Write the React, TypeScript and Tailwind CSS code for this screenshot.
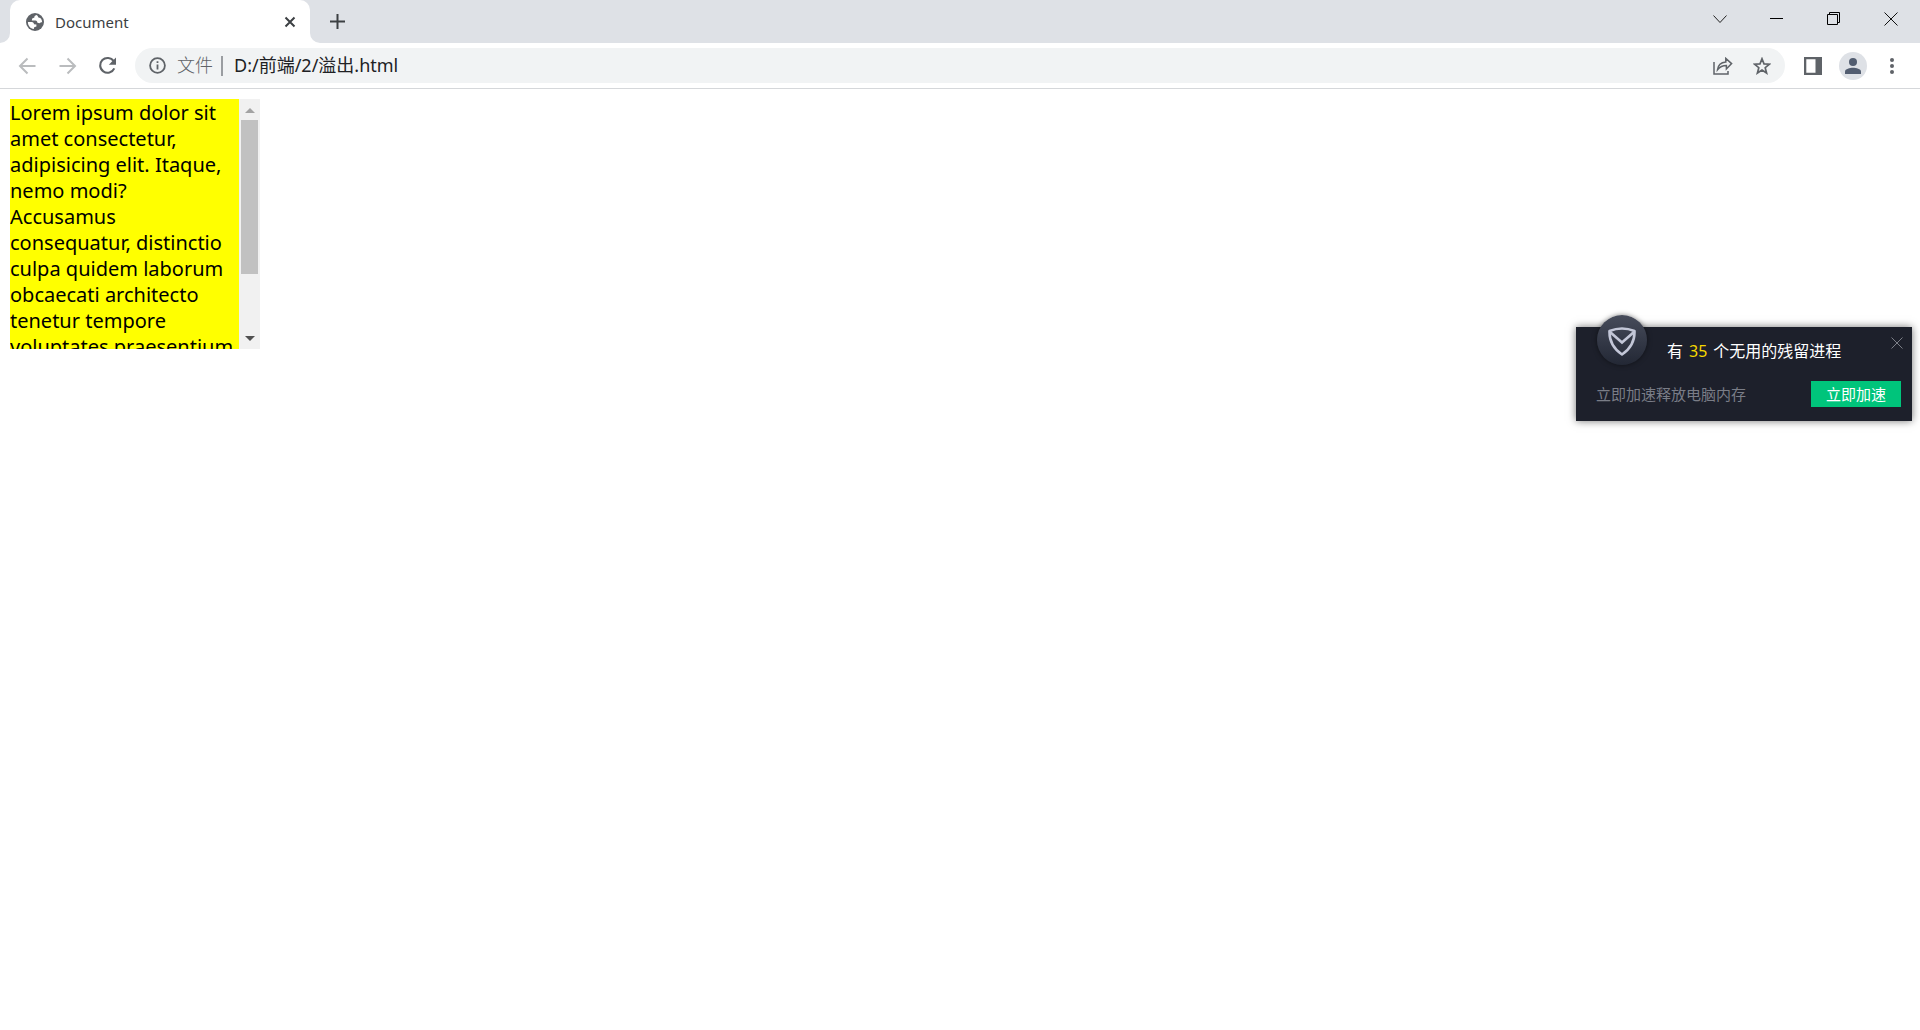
import React from "react";

const lines = [
  "Lorem ipsum dolor sit",
  "amet consectetur,",
  "adipisicing elit. Itaque,",
  "nemo modi?",
  "Accusamus",
  "consequatur, distinctio",
  "culpa quidem laborum",
  "obcaecati architecto",
  "tenetur tempore",
  "voluptates praesentium",
];

function GlobeIcon() {
  return (
    <svg viewBox="0 0 18 18" className="size-[18px]" aria-hidden="true">
      <circle cx="9" cy="9" r="9" fill="#5f6368" />
      <path
        d="M10.5 2 C8.8 2.6 8.2 3.4 8.4 4.4 L6.2 5.4 L5.8 7.4 L9.4 7.4 C10.8 7.6 11.4 8.6 11.4 9.8 L13.4 10.2 C14.4 10 15 9.2 16.2 9.4 C16 6.2 14.4 4.8 13.2 4.8 C11.8 4.8 12.4 3 10.5 2 Z M1.9 9 L5.8 9 C7.2 9.2 8 10 8 11.2 L10.4 11.4 L10.4 13.4 L8.2 14.2 L7.8 16.1 C4.4 15.6 1.9 13 1.9 9 Z"
        fill="#fff"
      />
    </svg>
  );
}

function TabStrip() {
  return (
    <header className="flex h-[43px] items-stretch bg-[#dee1e6] pl-[10px]">
      <div className="relative flex w-[300px] items-center rounded-t-[10px] bg-white pl-4 pr-[14px]">
        <svg viewBox="0 0 10 10" className="absolute -left-[10px] bottom-0 size-[10px]" aria-hidden="true">
          <path d="M10 0 V10 H0 A10 10 0 0 0 10 0Z" fill="#fff" />
        </svg>
        <svg viewBox="0 0 10 10" className="absolute -right-[10px] bottom-0 size-[10px]" aria-hidden="true">
          <path d="M0 0 V10 H10 A10 10 0 0 1 0 0Z" fill="#fff" />
        </svg>
        <GlobeIcon />
        <span className="ml-[11px] flex-1 text-[15px] leading-5 text-[#3c4043]">Document</span>
        <button aria-label="Close tab" className="grid size-3 place-items-center">
          <svg viewBox="0 0 12 12" className="size-3" stroke="#3c4043" strokeWidth="2" fill="none">
            <path d="M1.5 1.5 L10.5 10.5 M10.5 1.5 L1.5 10.5" />
          </svg>
        </button>
      </div>
      <button aria-label="New tab" className="ml-5 grid w-[15px] place-items-center">
        <svg viewBox="0 0 15 15" className="size-[15px]" stroke="#3c4043" strokeWidth="2" fill="none">
          <path d="M7.5 0 V15 M0 7.5 H15" />
        </svg>
      </button>
      <div className="ml-auto flex h-[37px] pr-px">
        <button aria-label="Search tabs" className="grid w-[57px] place-items-center">
          <svg viewBox="0 0 14 14" className="size-[14px]" stroke="#222" fill="none">
            <path d="M0.5 3.5 L7 10.5 L13.5 3.5" />
          </svg>
        </button>
        <button aria-label="Minimize" className="grid w-[57px] place-items-center">
          <svg viewBox="0 0 13 13" className="size-[13px]" stroke="#000" fill="none">
            <path d="M0 6.5 H13" />
          </svg>
        </button>
        <button aria-label="Restore" className="grid w-[57px] place-items-center">
          <svg viewBox="0 0 13 13" className="size-[13px]" stroke="#000" fill="none">
            <path d="M0.5 2.5 H10.5 V12.5 H0.5 Z M2.5 2.5 V0.5 H12.5 V10.5 H10.5" />
          </svg>
        </button>
        <button aria-label="Close window" className="grid w-[57px] place-items-center">
          <svg viewBox="0 0 14 14" className="size-[14px]" stroke="#111" fill="none">
            <path d="M0.5 0.5 L13.5 13.5 M13.5 0.5 L0.5 13.5" />
          </svg>
        </button>
      </div>
    </header>
  );
}

function Toolbar() {
  return (
    <nav className="flex h-[46px] items-center border-b border-[#d5d7da] bg-white pl-[18px] pr-[25px]">
      <button aria-label="Back">
        <svg viewBox="0 0 18 18" className="size-[18px]" stroke="#babcbe" strokeWidth="2" fill="none">
          <path d="M17.5 9 H2 M9.5 1.5 L2 9 L9.5 16.5" />
        </svg>
      </button>
      <button aria-label="Forward" className="ml-[23px]">
        <svg viewBox="0 0 18 18" className="size-[18px]" stroke="#babcbe" strokeWidth="2" fill="none">
          <path d="M0.5 9 H16 M8.5 1.5 L16 9 L8.5 16.5" />
        </svg>
      </button>
      <button aria-label="Reload" className="ml-[21px]">
        <svg viewBox="0 0 20 20" className="size-5">
          <path d="M15.7 5.2 A7.4 7.4 0 1 0 16.3 12.4" stroke="#5f6368" strokeWidth="2.1" fill="none" />
          <path d="M18 1.6 V8.8 H10.8 Z" fill="#5f6368" />
        </svg>
      </button>
      <div className="ml-[17px] flex h-[35px] flex-1 items-center rounded-full bg-[#f1f3f4] pl-[14px] pr-[14px]">
        <svg viewBox="0 0 17 17" className="size-[17px] shrink-0" stroke="#5f6368" strokeWidth="1.8" fill="none" aria-hidden="true">
          <circle cx="8.5" cy="8.5" r="7.4" />
          <path d="M8.5 7.5 V12.5 M8.5 4.2 V6" />
        </svg>
        <label htmlFor="url" className="ml-[11px] pb-[2px] text-[18px] font-light leading-6 text-[#5f6368]">
          文件
        </label>
        <span className="ml-2 h-5 w-[2px] bg-[#9a9da1]" />
        <input
          id="url"
          defaultValue="D:/前端/2/溢出.html"
          className="ml-[11px] min-w-0 flex-1 bg-transparent pb-[2px] text-[18px] leading-6 text-[#202124] outline-none"
        />
        <button aria-label="Share">
          <svg viewBox="0 0 20 18" className="h-[18px] w-5" stroke="#5f6368" strokeWidth="1.5" fill="none">
            <path d="M1 5 V17 H15 V14" />
            <path d="M4.5 12.8 C5 8.4 8 5.4 12.8 5 V1.4 L18.6 6.6 L13.4 12 V8.6 C9.4 8.6 6.8 10 4.5 12.8 Z" />
          </svg>
        </button>
        <button aria-label="Bookmark" className="ml-5">
          <svg viewBox="0 0 18 18" className="size-[18px]" stroke="#5f6368" strokeWidth="1.7" fill="none">
            <path d="M9 1.8 L11 6.9 L16.4 7.2 L12.2 10.7 L13.6 16 L9 13 L4.4 16 L5.8 10.7 L1.6 7.2 L7 6.9 Z" />
          </svg>
        </button>
      </div>
      <button aria-label="Side panel" className="ml-[19px]">
        <svg viewBox="0 0 18 18" className="size-[18px]">
          <path d="M0 0 H18 V18 H0 Z M2.3 2.3 V15.7 H11.5 V2.3 Z" fill="#5f6368" fillRule="evenodd" />
        </svg>
      </button>
      <button aria-label="Profile" className="ml-[17px] grid size-7 place-items-center rounded-full bg-[#dee1e6]">
        <svg viewBox="0 0 16 16" className="size-4" fill="#525d70">
          <circle cx="8" cy="4" r="4" />
          <path d="M0 16 V13.5 C0 11 5 9.8 8 9.8 S16 11 16 13.5 V16 Z" />
        </svg>
      </button>
      <button aria-label="Menu" className="ml-[22px]">
        <svg viewBox="0 0 6 18" className="h-[18px] w-[6px]" fill="#5f6368">
          <circle cx="3" cy="3" r="2" />
          <circle cx="3" cy="9" r="2" />
          <circle cx="3" cy="15" r="2" />
        </svg>
      </button>
    </nav>
  );
}

function ScrollBox() {
  return (
    <section className="flex size-[250px] overflow-hidden bg-[#ffff00]">
      <p className="min-w-0 flex-1 pt-px text-[20px] leading-[26px] text-black">
        {lines.map((line) => (
          <span key={line} className="block whitespace-nowrap">
            {line}
          </span>
        ))}
      </p>
      <div className="flex w-[21px] flex-col items-center bg-[#f1f1f1]">
        <button aria-label="Scroll up" className="grid h-[21px] w-full place-items-center">
          <svg viewBox="0 0 10 5" className="mt-[2px] h-[5px] w-[10px]" fill="#a3a3a3">
            <path d="M5 0 L10 5 H0 Z" />
          </svg>
        </button>
        <div className="h-[154px] w-[17px] bg-[#c1c1c1]" />
        <button aria-label="Scroll down" className="mt-auto grid h-[21px] w-full place-items-center">
          <svg viewBox="0 0 10 5" className="h-[5px] w-[10px]" fill="#505050">
            <path d="M0 0 H10 L5 5 Z" />
          </svg>
        </button>
      </div>
    </section>
  );
}

function Notification() {
  return (
    <aside className="absolute right-2 top-[327px] w-[336px] bg-[#1d202b] pb-[14px] pl-5 pr-[11px] pt-3 shadow-[0_0_8px_rgba(0,0,0,0.55)]">
      <div className="absolute -top-3 left-[21px] grid size-[50px] place-items-center rounded-full bg-linear-to-b from-[#474c5b] to-[#232835] shadow-[0_0_5px_rgba(0,0,0,0.5)]">
        <svg viewBox="0 0 28 29" className="mt-[2px] h-[29px] w-7" fill="none" aria-hidden="true">
          <path d="M1.5 4 Q14 -1 26.5 4 Q27 19 14 27.5 Q1 19 1.5 4 Z" stroke="#c3c7d8" strokeWidth="2.6" strokeLinejoin="round" />
          <path d="M2 5 L14 15.5 L26 5" stroke="#c3c7d8" strokeWidth="2.6" />
        </svg>
      </div>
      <h2 className="ml-[71px] flex gap-[6px] text-[16px] leading-6 text-white">
        <span>有</span>
        <span className="text-[#f5d800]">35</span>
        <span>个无用的残留进程</span>
      </h2>
      <button aria-label="Dismiss" className="absolute right-[9px] top-[10px]">
        <svg viewBox="0 0 12 12" className="size-3" stroke="#7c7f88" fill="none">
          <path d="M0.5 0.5 L11.5 11.5 M11.5 0.5 L0.5 11.5" />
        </svg>
      </button>
      <div className="mt-[18px] flex items-center justify-between">
        <p className="text-[15px] leading-6 text-[#7a7d87]">立即加速释放电脑内存</p>
        <button className="h-[26px] w-[90px] bg-[#00c47b] text-[15px] leading-6 text-white">立即加速</button>
      </div>
    </aside>
  );
}

export default function App() {
  return (
    <div className="relative min-h-screen bg-white font-['Noto_Sans','Noto_Sans_CJK_SC',sans-serif]">
      <TabStrip />
      <Toolbar />
      <main className="p-[10px]">
        <ScrollBox />
      </main>
      <Notification />
    </div>
  );
}
